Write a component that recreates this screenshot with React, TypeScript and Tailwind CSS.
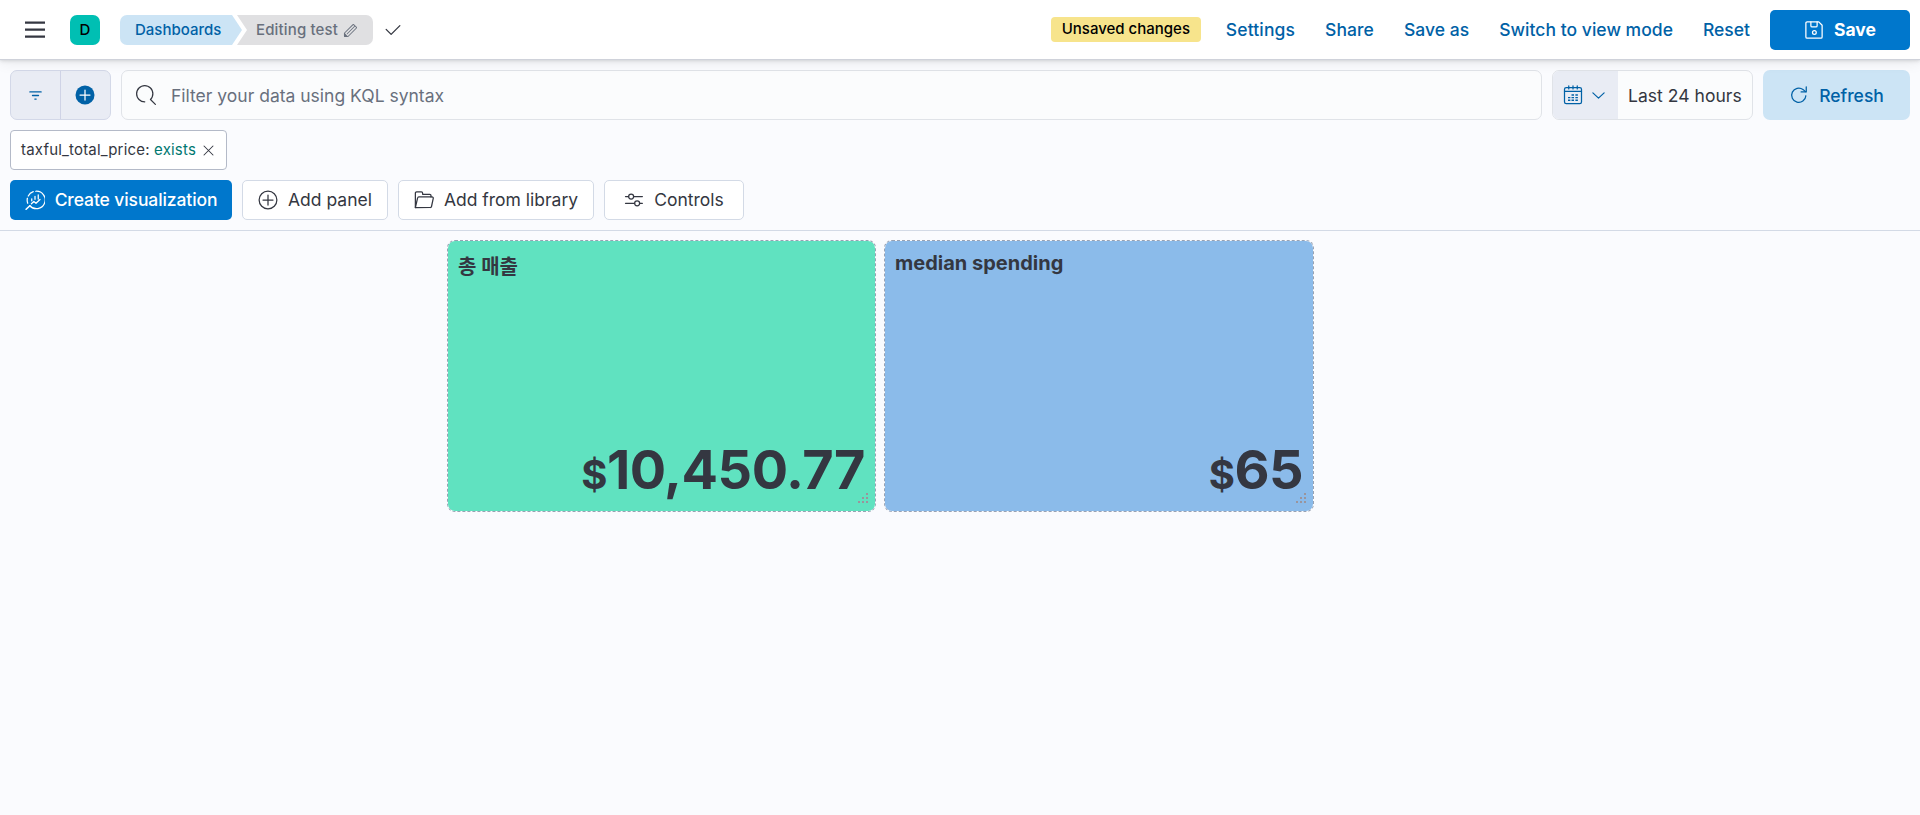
import type { ReactNode } from "react";

type IconProps = { className?: string; children: ReactNode };

function Icon({ className = "size-5", children }: IconProps) {
  return (
    <svg viewBox="0 0 16 16" className={`${className} shrink-0`} fill="none" stroke="currentColor" strokeWidth="1" strokeLinecap="round" strokeLinejoin="round">
      {children}
    </svg>
  );
}

const MenuIcon = () => (
  <Icon>
    <path d="M0 1.2h16v1.7H0zM0 6.8h16v1.7H0zM0 12.4h16v1.7H0z" fill="currentColor" stroke="none" />
  </Icon>
);

const PencilIcon = () => (
  <Icon className="size-[15px]">
    <path
      fill="currentColor"
      stroke="none"
      d="M12.148 3.148L11 2l-9 9v3h3l9-9-1.144-1.144-8.002 7.998a.502.502 0 01-.708 0 .502.502 0 010-.708l8.002-7.998zM11 1c.256 0 .512.098.707.293l3 3a.999.999 0 010 1.414l-9 9A.997.997 0 015 15H2a1 1 0 01-1-1v-3c0-.265.105-.52.293-.707l9-9A.997.997 0 0111 1zM5 14H2v-3l3 3z"
    />
  </Icon>
);

const CheckIcon = () => (
  <Icon>
    <path
      fill="currentColor"
      stroke="none"
      d="M6.5 12a.502.502 0 01-.354-.146l-4-4a.502.502 0 01.708-.708L6.5 10.793l6.646-6.647a.502.502 0 01.708.708l-7 7A.502.502 0 016.5 12"
    />
  </Icon>
);

const SaveIcon = () => (
  <Icon>
    <path d="M2.5 1.5h9.3l2.7 2.7v9.3a1 1 0 0 1-1 1h-11a1 1 0 0 1-1-1v-11a1 1 0 0 1 1-1z" />
    <path d="M5.5 1.5v3a1 1 0 0 0 1 1h3a1 1 0 0 0 1-1v-3" />
    <circle cx="8.3" cy="10" r="1.5" />
  </Icon>
);

const FilterIcon = () => (
  <Icon className="size-[15px]">
    <path d="M2 4.2h12M4.8 8h6.4M7.3 11.8h1.4" strokeWidth="1.4" />
  </Icon>
);

const PlusFilledIcon = () => (
  <Icon>
    <circle cx="8" cy="8" r="7.6" fill="currentColor" stroke="none" />
    <path d="M8 4v8M4 8h8" stroke="white" />
  </Icon>
);

const SearchIcon = () => (
  <Icon>
    <path
      fill="currentColor"
      stroke="none"
      d="M11.271 11.978l3.872 3.873a.502.502 0 00.708 0 .502.502 0 000-.708l-3.565-3.564c2.38-2.747 2.267-6.923-.342-9.532-2.73-2.73-7.17-2.73-9.898 0-2.728 2.729-2.728 7.17 0 9.9a6.955 6.955 0 004.949 2.05.5.5 0 000-1 5.96 5.96 0 01-4.242-1.757 6.01 6.01 0 010-8.486 6.004 6.004 0 018.484 0 6.01 6.01 0 010 8.486.5.5 0 00.034.738z"
    />
  </Icon>
);

const CalendarIcon = () => (
  <Icon>
    <rect x="1.2" y="2" width="13.6" height="12.9" rx="1.4" />
    <path d="M1.2 5h13.6M4.6.7v2.4M8 .7v2.4M11.4.7v2.4" />
    <path d="M6.8 8h2M9.9 8h2M4 10.1h1.9M6.8 10.1h2M9.9 10.1h2M4 12.2h1.9M6.8 12.2h2M9.9 12.2h2" strokeLinecap="butt" strokeWidth="1.1" />
  </Icon>
);

const ChevronIcon = () => (
  <Icon className="size-[15px]">
    <path d="M2 5.2l6 5.6 6-5.6" strokeWidth="1.3" />
  </Icon>
);

const RefreshIcon = () => (
  <Icon>
    <path d="M13.5 8.6a5.7 5.7 0 1 1-2.3-5c.8.6 1.4 1.1 1.9 1.7" />
    <path d="M13.8 1.4v4.1H9.7" />
  </Icon>
);

const CrossIcon = () => (
  <Icon className="size-[15px]">
    <path d="M3.2 3.2l9.6 9.6M12.8 3.2l-9.6 9.6" strokeWidth="1.1" />
  </Icon>
);

const LensIcon = () => (
  <Icon>
    <path d="M8.6 1a7 7 0 1 1-4.7 11.6M2.2 10.6A7 7 0 0 1 1.9 6.6M2.6 4.8A7 7 0 0 1 6.6 1.3" />
    <path d="M3.9 12.6L.9 15.4" strokeWidth="1.3" />
    <path d="M5.4 7v1.6M8 5v2.4M10.6 3.8v3.4M5.1 11l2-1.8 1.7 1.4 3.2-3" />
  </Icon>
);

const PlusCircleIcon = () => (
  <Icon>
    <circle cx="8" cy="8" r="7.1" />
    <path d="M8 4v8M4 8h8" />
  </Icon>
);

const FolderIcon = () => (
  <Icon>
    <path d="M1.1 14V2.5a1 1 0 0 1 1-1h3.8a1 1 0 0 1 1 1v.9h5.7a1 1 0 0 1 1 1v1.1" />
    <path d="M1.1 14l1.8-7.7a1 1 0 0 1 1-.8h10.5a1 1 0 0 1 1 1.2L14 13.2a1 1 0 0 1-1 .8z" />
  </Icon>
);

const ControlsIcon = () => (
  <Icon>
    <circle cx="5.7" cy="5.2" r="2" />
    <circle cx="10.5" cy="10.6" r="2" />
    <path d="M1.2 5.2h2.5M7.7 5.2h7M1.2 10.6h7.3M12.5 10.6h2.2" />
  </Icon>
);

function ResizeHandle() {
  return (
    <svg viewBox="0 0 10 10" className="absolute right-[7px] bottom-[8px] size-[10px]">
      <path d="M8 0h2v2H8zM8 4h2v2H8zM8 8h2v2H8zM4 4h2v2H4zM4 8h2v2H4zM0 8h2v2H0z" fill="#9a949c" />
    </svg>
  );
}

function Header() {
  const links = [
    { label: "Settings", className: "ml-[25px] tracking-[0.12px]" },
    { label: "Share", className: "ml-[30px] tracking-[0.08px]" },
    { label: "Save as", className: "ml-[30px] tracking-[0.04px]" },
    { label: "Switch to view mode", className: "ml-[30px] tracking-[0.03px]" },
    { label: "Reset", className: "ml-[30px]" },
  ];
  return (
    <header className="relative flex h-[59px] shrink-0 items-center bg-white pr-[10px] pl-[25px] shadow-[0_1px_1px_#cfd2da,0_2px_4px_rgba(0,0,0,0.13),0_5px_12px_rgba(0,0,0,0.06)]">
      <MenuIcon />
      <div className="mt-px ml-[25px] flex size-[30px] items-center justify-center rounded-[7px] bg-[#00bfb3] text-[15px] font-medium text-black">D</div>
      <nav className="mt-px ml-5 flex text-[15px] font-medium">
        <a className="flex h-[30px] w-[122px] items-center rounded-l-[7px] bg-[#cce4f5] pl-[15px] text-[#0061a6] [clip-path:polygon(0_0,112px_0,100%_50%,112px_100%,0_100%)]">
          Dashboards
        </a>
        <span className="-ml-[5px] flex h-[30px] w-[136px] items-center gap-[5px] rounded-r-[7px] bg-[#e0e0e2] pl-[19px] tracking-[0.15px] text-[#69707d] [clip-path:polygon(0_0,100%_0,100%_100%,0_100%,10px_50%)]">
          Editing test
          <PencilIcon />
        </span>
      </nav>
      <span className="ml-[10px] text-[#343741]">
        <CheckIcon />
      </span>
      <div className="ml-auto flex items-center text-[17.5px] font-medium text-[#0061a6]">
        <span className="flex h-[25px] w-[150px] items-center justify-center rounded-[4px] bg-[#f7e48c] text-[15px] text-black">Unsaved changes</span>
        {links.map((l) => (
          <a key={l.label} className={`pt-[2px] ${l.className}`}>
            {l.label}
          </a>
        ))}
        <button className="mt-px ml-5 flex h-10 w-[140px] items-center justify-center gap-[10px] rounded-[5px] bg-[#0077cc] font-bold text-white">
          <SaveIcon />
          Save
        </button>
      </div>
    </header>
  );
}

function QueryBar() {
  return (
    <div className="flex h-[50px] gap-[10px]">
      <div className="flex w-[101px] shrink-0 rounded-[7px] border border-[#d3d8e8] bg-[#e9ecf4] text-[#0061a6]">
        <span className="flex w-[50px] items-center justify-center border-r border-[#cfd3e6] pr-px">
          <FilterIcon />
        </span>
        <span className="flex flex-1 items-center justify-center pr-px pb-px">
          <PlusFilledIcon />
        </span>
      </div>
      <div className="flex flex-1 items-center gap-[15px] rounded-[7px] border border-[#e0e3e8] bg-[#fbfcfd] pl-[14px] text-[17.5px] text-[#69707d]">
        <span className="text-[#343741]">
          <SearchIcon />
        </span>
        <span className="pt-[2px]">Filter your data using KQL syntax</span>
      </div>
      <div className="flex w-[201px] shrink-0 overflow-hidden rounded-[7px] border border-[#e0e3e8] bg-[#fbfcfd]">
        <span className="flex w-[65px] items-center gap-[8px] bg-[#e9ecf4] pb-px pl-[10px] text-[#0061a6]">
          <CalendarIcon />
          <span className="pt-[2px]">
            <ChevronIcon />
          </span>
        </span>
        <span className="flex flex-1 items-center pt-[2px] pl-[10px] text-[17.5px] tracking-[0.04px] whitespace-nowrap text-[#343741]">Last 24 hours</span>
      </div>
      <button className="flex w-[147px] shrink-0 items-center justify-center gap-[10px] rounded-[7px] bg-[#cce4f5] text-[17.5px] font-medium text-[#0061a6]">
        <RefreshIcon />
        <span className="pt-[2px]">Refresh</span>
      </button>
    </div>
  );
}

function Toolbar() {
  const items = [
    { label: "Add panel", icon: <PlusCircleIcon />, className: "w-[146px]" },
    { label: "Add from library", icon: <FolderIcon />, className: "w-[196px]" },
    { label: "Controls", icon: <ControlsIcon />, className: "w-[140px]" },
  ];
  return (
    <div className="mt-[10px] flex h-10 gap-[10px] text-[17.5px]">
      <button className="flex w-[222px] items-center justify-center gap-[10px] rounded-[5px] bg-[#0077cc] font-medium tracking-[-0.1px] text-white">
        <LensIcon />
        Create visualization
      </button>
      {items.map((it) => (
        <button key={it.label} className={`flex items-center justify-center gap-[10px] rounded-[5px] border border-[#d3dae6] bg-white text-[#343741] ${it.className}`}>
          {it.icon}
          {it.label}
        </button>
      ))}
    </div>
  );
}

type MetricProps = { title: string; value: string; className: string; titleClassName: string };

function MetricPanel({ title, value, className, titleClassName }: MetricProps) {
  return (
    <section className={`relative flex h-[272px] flex-col justify-between rounded-[8px] border border-dashed border-[#98a2b3] bg-clip-padding px-[10px] text-[#343741] ${className}`}>
      <h2 className={`text-[20px] leading-[26px] font-bold ${titleClassName}`}>{title}</h2>
      <p className="pb-[3px] text-right text-[54px] leading-[66px] font-bold tracking-[-0.5px]">
        <span className="text-[40px]">$</span>
        {value}
      </p>
      <ResizeHandle />
    </section>
  );
}

export default function App() {
  return (
    <div className="flex h-[815px] w-[1920px] flex-col overflow-hidden bg-[#fafbfe] font-['Inter','Noto_Sans_CJK_KR',sans-serif] text-[#343741]">
      <Header />
      <div className="border-b border-[#d3dae6] px-[10px] pt-[11px] pb-[10px]">
        <QueryBar />
        <div className="mt-[10px] flex h-10 w-[217px] items-center rounded-[4px] border border-[#b4bac8] bg-white pl-[10px] text-[15px] tracking-[0.18px] whitespace-nowrap">
          taxful_total_price:&nbsp;<span className="mr-[5px] text-[#007871]">exists</span>
          <CrossIcon />
        </div>
        <Toolbar />
      </div>
      <main className="flex gap-[8px] pt-[9px] pl-[447px]">
        <MetricPanel title="총 매출" value="10,450.77" className="w-[429px] bg-[#60e2c0]" titleClassName="pt-[13px]" />
        <MetricPanel title="median spending" value="65" className="w-[430px] bg-[#8bbbea]" titleClassName="pt-[9px]" />
      </main>
    </div>
  );
}
